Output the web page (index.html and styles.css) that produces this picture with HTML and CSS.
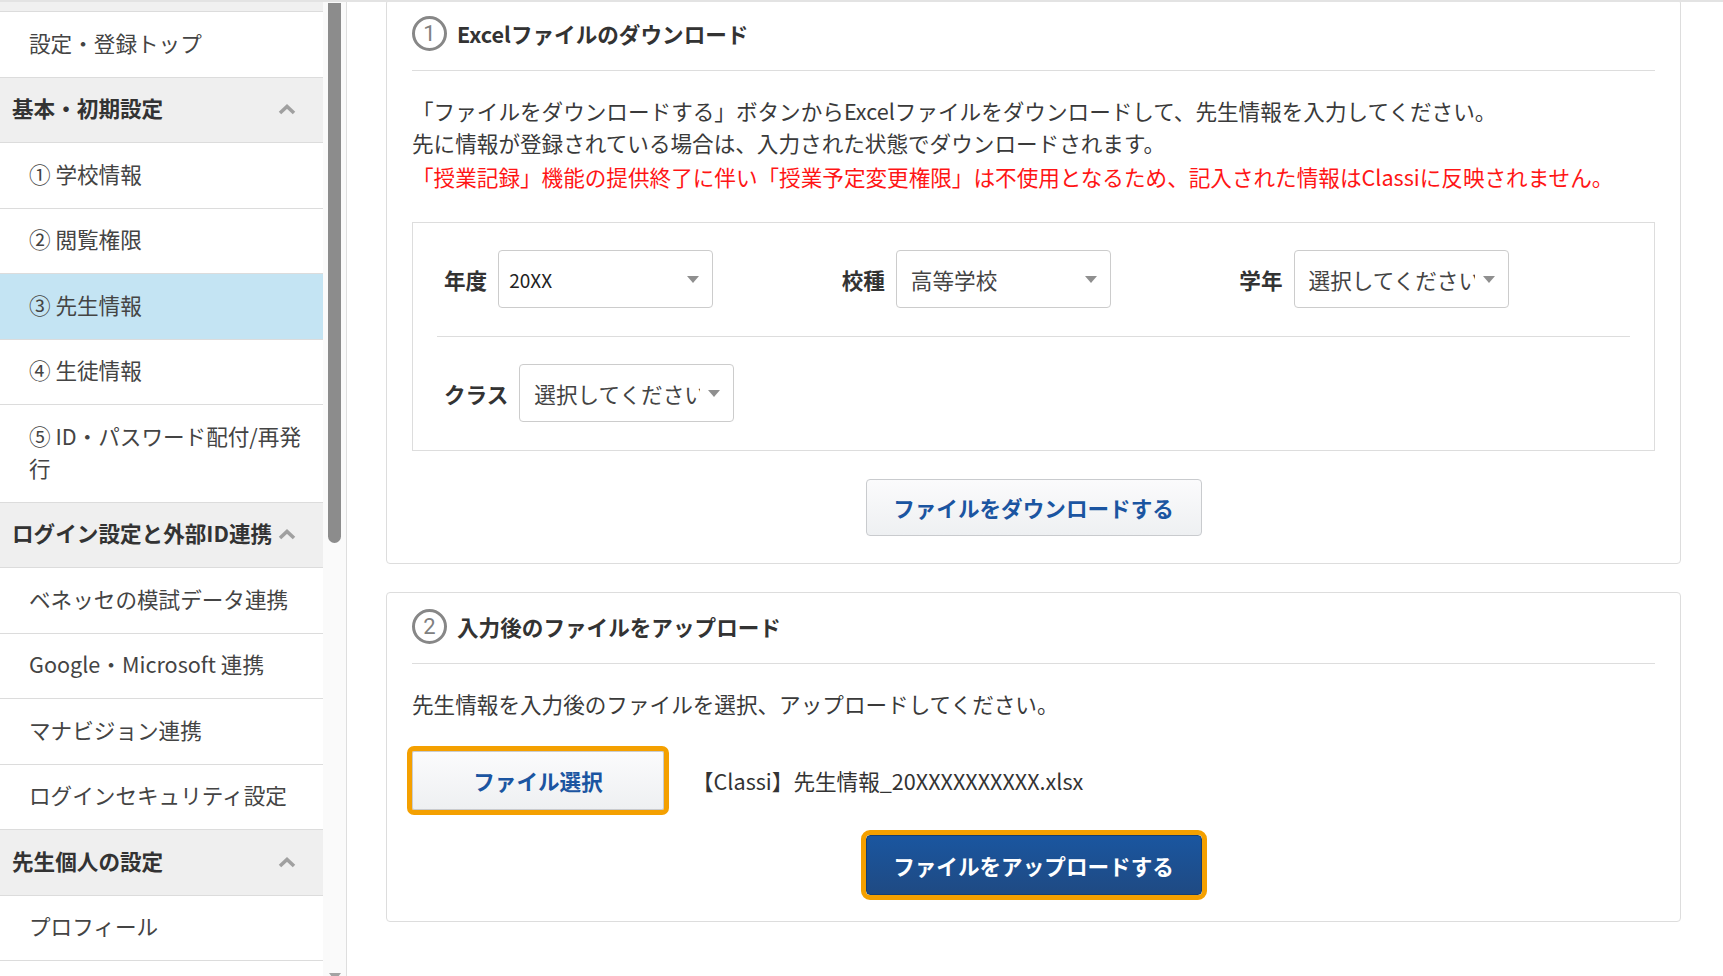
FILE: index.html
```html
<!DOCTYPE html>
<html lang="ja">
<head>
    <meta charset="UTF-8">
    <title>先生情報 | 設定・登録</title>
    <link rel="stylesheet" href="styles.css">
</head>
<body>

    <div class="layout">

        <!-- Side navigation -->
        <aside class="sidebar">
            <nav class="nav">
                <div class="nav-prev"></div>
                <a class="nav-item">設定・登録トップ</a>

                <div class="nav-head">
                    <span>基本・初期設定</span>
                    <svg class="chevron" width="18" height="11" viewBox="0 0 18 11"><polyline points="2,9 9,2.5 16,9" /></svg>
                </div>
                <a class="nav-item">① 学校情報</a>
                <a class="nav-item">② 閲覧権限</a>
                <a class="nav-item current">③ 先生情報</a>
                <a class="nav-item">④ 生徒情報</a>
                <a class="nav-item">⑤ ID・パスワード配付/再発行</a>

                <div class="nav-head">
                    <span>ログイン設定と外部ID連携</span>
                    <svg class="chevron" width="18" height="11" viewBox="0 0 18 11"><polyline points="2,9 9,2.5 16,9" /></svg>
                </div>
                <a class="nav-item">ベネッセの模試データ連携</a>
                <a class="nav-item">Google・Microsoft 連携</a>
                <a class="nav-item">マナビジョン連携</a>
                <a class="nav-item">ログインセキュリティ設定</a>

                <div class="nav-head">
                    <span>先生個人の設定</span>
                    <svg class="chevron" width="18" height="11" viewBox="0 0 18 11"><polyline points="2,9 9,2.5 16,9" /></svg>
                </div>
                <a class="nav-item">プロフィール</a>
            </nav>
            <div class="scrollbar">
                <div class="thumb"></div>
                <div class="scroll-arrow"></div>
            </div>
        </aside>

        <!-- Main content -->
        <main class="main">

            <!-- Step 1: download -->
            <section class="card first">
                <h2 class="card-title"><span class="step">1</span>Excelファイルのダウンロード</h2>
                <p class="lead">「ファイルをダウンロードする」ボタンからExcelファイルをダウンロードして、先生情報を入力してください。<br>先に情報が登録されている場合は、入力された状態でダウンロードされます。</p>
                <p class="notice">「授業記録」機能の提供終了に伴い「授業予定変更権限」は不使用となるため、記入された情報はClassiに反映されません。</p>

                <div class="filter-box">
                    <div class="filter-row">
                        <div class="field">
                            <span class="field-label">年度</span>
                            <div class="select"><span class="select-value num">20XX</span><span class="caret"></span></div>
                        </div>
                        <div class="field">
                            <span class="field-label">校種</span>
                            <div class="select"><span class="select-value">高等学校</span><span class="caret"></span></div>
                        </div>
                        <div class="field">
                            <span class="field-label">学年</span>
                            <div class="select"><span class="select-value">選択してください</span><span class="caret"></span></div>
                        </div>
                    </div>
                    <div class="filter-row">
                        <div class="field">
                            <span class="field-label">クラス</span>
                            <div class="select"><span class="select-value">選択してください</span><span class="caret"></span></div>
                        </div>
                    </div>
                </div>

                <button class="btn btn-light btn-center">ファイルをダウンロードする</button>
            </section>

            <!-- Step 2: upload -->
            <section class="card">
                <h2 class="card-title"><span class="step">2</span>入力後のファイルをアップロード</h2>
                <p class="lead">先生情報を入力後のファイルを選択、アップロードしてください。</p>

                <div class="file-row">
                    <button class="btn btn-light btn-file focus">ファイル選択</button>
                    <span class="file-name">【Classi】先生情報_20XXXXXXXXXX.xlsx</span>
                </div>

                <button class="btn btn-primary btn-center btn-upload focus">ファイルをアップロードする</button>
            </section>

        </main>
    </div>

</body>
</html>
```

FILE: styles.css
```css
/* Base */
body {
    margin: 0;
    font-family: "Noto Sans CJK JP", "Noto Sans", sans-serif;
    font-size: 21.6px;
    color: #333;
    background-color: #fff;
}

.layout {
    display: flex;
    height: 974px;
    border-top: 2px solid #e3e3e3;
    overflow: hidden;
}

/* Sidebar */
.sidebar {
    display: flex;
    width: 346px;
    border-right: 1px solid #dedede;
    flex-shrink: 0;
}

.nav {
    width: 323px;
    overflow: hidden;
}

.nav-prev {
    height: 9px;
    background-color: #f0f0f0;
    border-bottom: 1px solid #dcdcdc;
}

.nav-item {
    display: block;
    padding: 14.5px 16px 18px 29px;
    line-height: 32px;
    border-bottom: 1px solid #dcdcdc;
    color: #444;
    text-decoration: none;
}

.nav-item.current {
    background-color: #c4e4f3;
}

.nav-head {
    display: flex;
    align-items: center;
    justify-content: space-between;
    padding: 14.5px 27px 18px 12px;
    line-height: 32px;
    background-color: #efefef;
    border-bottom: 1px solid #dcdcdc;
    font-weight: bold;
    color: #333;
}

.chevron {
    margin-top: 3px;
}

.chevron polyline {
    fill: none;
    stroke: #a0a0a0;
    stroke-width: 3.6;
}

.scrollbar {
    display: flex;
    flex-direction: column;
    justify-content: space-between;
    align-items: center;
    width: 23px;
    background-color: #fafafa;
}

.thumb {
    width: 13px;
    height: 540px;
    margin-top: 1px;
    background-color: #8c8c8c;
    border-radius: 0 0 7px 7px;
}

.scroll-arrow {
    width: 0;
    height: 0;
    border-left: 6px solid transparent;
    border-right: 6px solid transparent;
    border-top: 8px solid #a3a3a3;
    margin-bottom: -5px;
}

/* Main column */
.main {
    flex: 1;
    padding: 0 42px 0 39px;
    overflow: hidden;
}

.card {
    border: 1px solid #dddddd;
    border-radius: 4px;
    padding: 0 25px 26px;
    margin-top: 28px;
}

.card.first {
    margin-top: -3px;
    padding-bottom: 27px;
}

.card-title {
    display: flex;
    align-items: center;
    gap: 10px;
    margin: 0;
    padding: 16px 0 19px;
    font-size: 21.6px;
    font-weight: bold;
    line-height: 35px;
    border-bottom: 1px solid #dddddd;
    color: #333;
}

.step {
    display: flex;
    align-items: center;
    justify-content: center;
    box-sizing: border-box;
    width: 35px;
    height: 35px;
    border: 3px solid #878787;
    border-radius: 50%;
    font-family: Roboto, sans-serif;
    font-weight: 400;
    font-size: 22px;
    color: #808080;
    line-height: 1;
}

.lead {
    margin: 24px 0 0;
    line-height: 32px;
    color: #3a3a3a;
}

.notice {
    margin: 2px 0 0;
    line-height: 32px;
    color: #ff1515;
}

/* Filter box */
.filter-box {
    margin-top: 29px;
    padding: 0 24px;
    border: 1px solid #dddddd;
}

.filter-row {
    display: grid;
    grid-template-columns: repeat(3, 1fr);
    padding: 27px 0 28px;
    border-bottom: 1px solid #dddddd;
}

.filter-row:last-child {
    border-bottom: none;
}

.field {
    display: flex;
    align-items: center;
    gap: 11px;
    padding-left: 7px;
}

.field-label {
    font-weight: bold;
    color: #333;
}

.select {
    display: flex;
    align-items: center;
    box-sizing: border-box;
    width: 215px;
    height: 58px;
    padding: 0 13px 0 14px;
    border: 1px solid #cccccc;
    border-radius: 4px;
    background-color: #fff;
    color: #444;
}

.select-value {
    flex: 1;
    overflow: hidden;
    white-space: nowrap;
}

.select-value.num {
    font-size: 19px;
    color: #222;
    margin-left: -4px;
}

.caret {
    width: 0;
    height: 0;
    margin-left: 8px;
    border-left: 6px solid transparent;
    border-right: 6px solid transparent;
    border-top: 7px solid #8f8f8f;
}

/* Buttons */
.btn {
    box-sizing: border-box;
    font-family: inherit;
    font-size: 21.6px;
    font-weight: bold;
    border-radius: 4px;
    cursor: pointer;
}

.btn-center {
    display: block;
    width: 336px;
    margin: 28px auto 0;
}

.btn-light {
    height: 57px;
    color: #1b55a1;
    border: 1px solid #c9cbce;
    background: linear-gradient(#fbfbfc, #eef0f2);
}

.btn-primary {
    height: 60px;
    color: #fff;
    border: 1px solid #163f72;
    background: linear-gradient(#1a56a0, #1f4a83);
}

.btn-upload {
    margin-top: 25px;
}

.focus {
    outline: 5px solid #f4a000;
    outline-offset: 0;
}

.file-row {
    display: flex;
    align-items: center;
    gap: 28px;
    margin-top: 31px;
}

.btn-file {
    width: 252px;
    height: 59px;
    border-radius: 2px;
}

.file-name {
    color: #333;
}
```
